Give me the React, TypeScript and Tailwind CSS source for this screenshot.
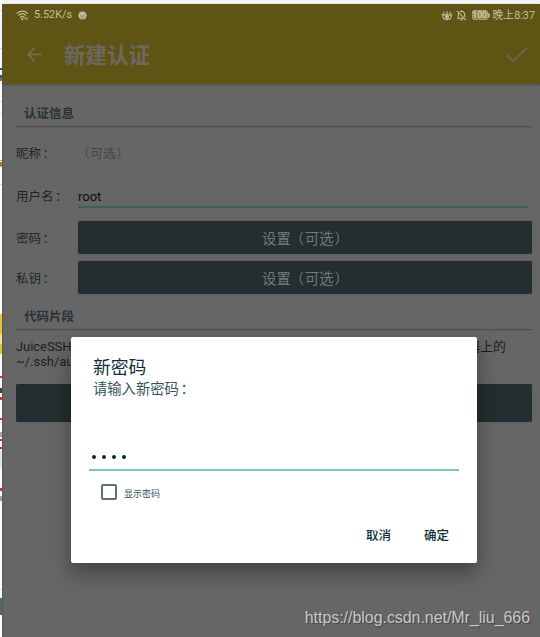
import type { ReactNode } from 'react'

// slivers of the page behind the window: [gap above, height, colour]
const edgeMarks: [number, number, string][] = [
  [10, 1, '#d8dada'],
  [10, 18, '#f0fbf9'],
  [9, 1, '#d4d4d4'],
  [19, 2, '#5a4f50'],
  [5, 3, '#2e5f80'],
  [0, 3, '#8a7058'],
  [20, 1, '#d8d8d8'],
  [11, 1, '#dcdcdc'],
  [46, 1, '#e2a24a'],
  [1, 4, '#a8794a'],
  [0, 1, '#e2a24a'],
  [17, 1, '#d8d8d8'],
  [129, 20, '#e6c62e'],
  [0, 10, '#efe0a0'],
  [0, 10, '#e6c62e'],
  [22, 2, '#f0281e'],
  [10, 5, '#3a4448'],
  [4, 3, '#f0281e'],
  [18, 2, '#f0281e'],
  [12, 5, '#a8a8a8'],
  [2, 2, '#f0281e'],
  [6, 2, '#f0281e'],
  [2, 17, '#dbe8f2'],
  [20, 3, '#f0281e'],
  [5, 5, '#a0a0a0'],
  [88, 1, '#d8d8d8'],
  [8, 17, '#50656c'],
]

function StatusBar() {
  return (
    <div className="flex h-[22px] items-center justify-between pl-[13px] pr-[5px] pt-[1px] font-['Roboto','Noto_Sans_CJK_SC',sans-serif] text-[11px] leading-none text-[#c3bd9d]">
      <div className="flex items-center">
        <svg width="13" height="11" viewBox="0 0 13 11" fill="none" stroke="currentColor" strokeWidth="1.1" strokeLinecap="round">
          <path d="M1 3.4C4 .4 8.6.4 11.600 3.400M2.700 5.400c2.100-2 5.100-2 7.200 0M4.400 7.300c1.100-1 2.700-1 3.800 0" />
          <circle cx="6.300" cy="9.200" r=".6" fill="currentColor" />
          <path d="M9.300 7.200v2.300M11.200 7.400v2.300" strokeWidth=".8" />
        </svg>
        <span className="ml-[5px] text-[10.900px]">5.52K/s</span>
        <svg className="ml-[6px]" width="9" height="9" viewBox="0 0 9 9">
          <circle cx="4.500" cy="4.500" r="4" fill="currentColor" />
          <path d="M2 4.200l2 1.600 3-3.200M3 7.100c1.800.3 3.200-.4 4.100-2" fill="none" stroke="#83794a" strokeWidth=".8" />
        </svg>
      </div>
      <div className="flex items-center">
        <svg width="12" height="11" viewBox="0 0 12 11" fill="none" stroke="currentColor" strokeWidth="1.100">
          <path d="M2.500 5.200C.8 7 2.600 9.600 6 9.600S11.200 7 9.500 5.200" />
          <path d="M.6 4.300C3.500 6.300 4 4.200 6 4.200s2.500 2.100 5.400.1" />
          <circle cx="6" cy="6.800" r="1.500" fill="currentColor" />
          <path d="M6 4V1.200M3.500 4L2.300 2M8.500 4l1.200-2" />
        </svg>
        <svg className="ml-[3px]" width="11" height="11" viewBox="0 0 11 11" fill="none" stroke="currentColor" strokeWidth="1.100">
          <path d="M1 8.300h7.600M2.300 8.100V4.700c0-.6.1-1.100.4-1.500M4 1.800C6.500.7 8.700 2.200 8.700 4.700v2.200M5.500.3v1M4.500 9.900h2M1 .8l9 9.300" />
        </svg>
        <div className="ml-[5px] flex h-[10px] w-[16px] items-center justify-center rounded-[2px] border border-[#a39c70] bg-[#8d8650] text-[8.500px] font-medium leading-none text-[#d8d3b6]">
          100
        </div>
        <div className="h-[5px] w-[2px] rounded-r-sm bg-[#b5ae86]" />
        <span className="ml-[3px] whitespace-nowrap pt-[1px] text-[10.800px]">晚上8:37</span>
      </div>
    </div>
  )
}

function Toolbar() {
  return (
    <div className="flex h-[56px] items-center pl-[24px] pr-[12px]">
      <svg width="15" height="15" viewBox="0 0 15 15" fill="none" stroke="#746e5c" strokeWidth="1.500">
        <path d="M15 7.500H1.300M7.600.8L1 7.500l6.600 6.700" />
      </svg>
      <h1 className="ml-[22px] flex-1 text-[21.500px] font-bold leading-none text-[#6d6961]">新建认证</h1>
      <svg width="22" height="17" viewBox="0 0 22 17" fill="none" stroke="#6b6455" strokeWidth="2">
        <path d="M1 9l6.300 6.300L21 1.500" />
      </svg>
    </div>
  )
}

function SectionTitle({ children }: { children: ReactNode }) {
  return (
    <div className="flex h-[26px] items-center border-b border-[#4e4e4e] pl-[8px] text-[12.500px] font-bold text-[#263237] shadow-[0_1px_0_#5f5f5f]">
      {children}
    </div>
  )
}

function Colon() {
  return <span className="pl-[0.12em]">：</span>
}

function Optional() {
  return (
    <>
      <span className="relative -left-[1px]">（</span>可选<span className="relative left-[1px]">）</span>
    </>
  )
}

function Row({ label, children }: { label: string; children: ReactNode }) {
  return (
    <div className="flex h-full items-center">
      <span className="w-[62px] shrink-0 whitespace-nowrap pt-[1px] text-[12.500px] text-[#1a262b]">
        {label}
        <Colon />
      </span>
      {children}
    </div>
  )
}

function OptionButton() {
  return (
    <button className="h-[33px] flex-1 rounded-[2px] bg-[#242d2f] text-[14.300px] text-[#74797a] shadow-[0_0_1px_#39484b]">
      设置
      <Optional />
    </button>
  )
}

function PasswordDialog() {
  return (
    <div className="absolute left-[71px] top-[337px] flex h-[226px] w-[406px] flex-col rounded-[2px] bg-white px-[18px] pt-[18px] text-[#0f3038] shadow-[0_9px_20px_1px_rgba(0,0,0,0.34)]">
      <h2 className="pl-[4px] text-[17.800px] leading-[22px]">新密码</h2>
      <p className="pl-[4px] text-[14.300px] leading-[22px] text-[#35545c]">
        请输入新密码
        <Colon />
      </p>
      <div className="mt-[43px] flex h-[29px] items-center gap-[6px] border-b-2 border-[#84c0c2] pl-[3px] pt-[2px]">
        {[0, 1, 2, 3].map((i) => (
          <span key={i} className="h-[4px] w-[4px] rounded-full bg-[#082c36]" />
        ))}
      </div>
      <label className="mt-[12px] flex h-[17px] items-center pl-[12px]">
        <span className="h-[16px] w-[16px] rounded-[2px] border-2 border-[#5d7077]" />
        <span className="ml-[7px] mt-[4px] text-[9px] leading-none text-[#35545c]">显示密码</span>
      </label>
      <div className="mt-[25px] flex justify-end gap-[33px] pr-[10px] text-[12.500px] font-medium leading-[20px]">
        <button>取消</button>
        <button>确定</button>
      </div>
    </div>
  )
}

export default function App() {
  return (
    <div className="relative flex h-[637px] w-[540px] overflow-hidden bg-[#f3f4f4] font-['Noto_Sans_CJK_SC',sans-serif]">
      <div className="flex w-[2px] shrink-0 flex-col bg-[#fbfcfc]">
        {edgeMarks.map(([gap, height, color], i) => (
          <div key={i} className="shrink-0" style={{ marginTop: gap, height, backgroundColor: color }} />
        ))}
      </div>

      <div className="mt-[4px] flex flex-1 flex-col border-l border-[#585858] bg-[#666666]">
        <header className="h-[80px] bg-[#5f5414] shadow-[0_1px_2px_#4c4c45]">
          <StatusBar />
          <Toolbar />
        </header>

        <main className="flex flex-col pl-[13px] pr-[8px] pt-[17px]">
          <SectionTitle>认证信息</SectionTitle>
          <div className="h-[52px]">
            <Row label="昵称">
              <span className="text-[12.500px] text-[#474747]">
                <Optional />
              </span>
            </Row>
          </div>
          <div className="h-[34px]">
            <Row label="用户名">
              <div className="mr-[4px] flex h-[24px] flex-1 items-center border-b-2 border-[#3d605c] pt-[4px] font-['Roboto',sans-serif] text-[13px] text-[#0c1012]">
                root
              </div>
            </Row>
          </div>
          <div className="mt-[8px] h-[33px]">
            <Row label="密码">
              <OptionButton />
            </Row>
          </div>
          <div className="mt-[7px] h-[33px]">
            <Row label="私钥">
              <OptionButton />
            </Row>
          </div>
          <div className="mt-[10px]">
            <SectionTitle>代码片段</SectionTitle>
          </div>
          <div className="mt-[9px] pr-[26px] font-['Roboto','Noto_Sans_CJK_SC',sans-serif] text-[12.900px] leading-[15px] text-[#172126]">
            <div className="flex h-[15px] justify-between">
              <span>JuiceSSH</span>
              <span>器上的</span>
            </div>
            <div className="h-[15px]">~/.ssh/au</div>
          </div>
          <button className="mt-[15px] h-[38px] rounded-[2px] bg-[#242d2f] shadow-[0_0_1px_#39484b]" />
        </main>
      </div>

      <PasswordDialog />

      <div className="absolute bottom-[9px] right-[10px] font-['Liberation_Sans',sans-serif] text-[15.900px] leading-[20px] text-[#c9c9c9] [text-shadow:1px_1px_1px_#444]">
        https://blog.csdn.net/Mr_liu_666
      </div>
    </div>
  )
}
